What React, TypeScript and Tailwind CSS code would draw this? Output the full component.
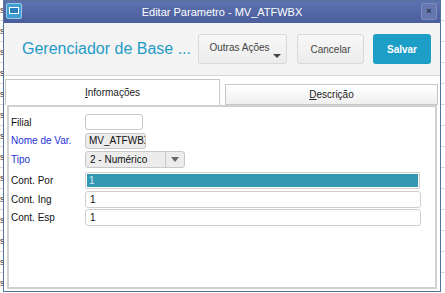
import React from "react";

const F = { fontFamily: '"Liberation Sans", Arial, sans-serif' };

function Row({ label, blue, children }: { label: string; blue?: boolean; children: React.ReactNode }) {
  return (
    <div className="flex items-center h-[18.5px]">
      <div className={`w-[76px] pl-[2px] text-[10px] ${blue ? "text-[#2430d8]" : "text-[#111]"}`}>{label}</div>
      {children}
    </div>
  );
}

export default function App() {
  return (
    <div className="relative w-[445px] h-[293px] overflow-hidden bg-white" style={F}>
      {/* background page */}
      <div className="absolute inset-0 flex flex-col">
        {Array.from({ length: 14 }).map((_, i) => (
          <div key={i} className="h-[21px] border-b border-[#d8d8d8] text-[9px] leading-[21px] pl-0 text-[#333]">s</div>
        ))}
      </div>
      {/* dialog */}
      <div className="absolute left-[3px] top-0 w-[438px] h-[292px] flex flex-col border border-[#56719e] bg-[#f3f3f3]">
        <div className="relative h-[22px] flex items-center justify-center bg-gradient-to-b from-[#5d72b0] to-[#4a5d9c]">
          <div className="absolute left-[2px] top-[2px] w-[16px] h-[16px] rounded-[2px] bg-[#3f9fd0] border border-[#9cc8e8] flex items-center justify-center">
            <div className="w-[10px] h-[7px] border border-white bg-[#2a7fb8] mb-[2px]" />
          </div>
          <span className="text-white text-[11px]">Editar Parametro - MV_ATFWBX</span>
          <div className="absolute right-[3px] top-[2px] w-[16px] h-[17px] rounded-[2px] bg-[#6577ae] border border-[#7d8cbc] flex items-center justify-center text-[#2a2f45] text-[9px] font-bold">×</div>
        </div>
        <div className="h-[53px] flex items-center border-b border-[#d6d6d6] bg-[#f4f4f4]">
          <div className="ml-[18px] text-[16px] text-[#1f9bc8] w-[176px] whitespace-nowrap">Gerenciador de Base ...</div>
          <div className="relative w-[89px] h-[30px] ml-[0px] rounded-[3px] border border-[#d8d8d8] bg-gradient-to-b from-[#f8f8f8] to-[#ececec] flex items-center justify-center text-[10px] text-[#444] pb-[4px] pr-[6px]">
            Outras Ações
            <div className="absolute right-[5px] bottom-[5px] w-0 h-0 border-l-[4px] border-r-[4px] border-t-[4px] border-l-transparent border-r-transparent border-t-[#444]" />
          </div>
          <div className="w-[67px] h-[30px] ml-[10px] rounded-[3px] border border-[#d8d8d8] bg-gradient-to-b from-[#f8f8f8] to-[#ececec] flex items-center justify-center text-[10px] text-[#444]">Cancelar</div>
          <div className="w-[58px] h-[30px] ml-[9px] rounded-[3px] bg-[#1d9ec6] flex items-center justify-center text-[10px] font-bold text-white">Salvar</div>
        </div>
        <div className="flex-1 bg-white px-[1px] pt-[3px] pb-[2px] flex flex-col">
          <div className="flex items-end h-[26px]">
            <div className="w-[215px] h-[26px] border border-b-0 border-[#c8c8c8] bg-white flex items-center justify-center text-[10px] text-[#222]">
              <span><span className="underline">I</span>nformações</span>
            </div>
            <div className="w-[213px] h-[21px] ml-[5px] border border-[#c8c8c8] bg-gradient-to-b from-white to-[#efefef] flex items-center justify-center text-[10px] text-[#222]">
              <span><span className="underline">D</span>escrição</span>
            </div>
          </div>
          <div className="flex-1 mx-[2px] border-2 border-[#d0d0d0] bg-white pt-[6px] flex flex-col">
            <Row label="Filial">
              <div className="w-[58px] h-[16px] rounded-[3px] border border-[#c8c8c8] bg-white" />
            </Row>
            <Row label="Nome de Var." blue>
              <div className="w-[61px] h-[16px] rounded-[3px] border border-[#c8c8c8] bg-[#ececec] text-[10px] text-[#111] pl-[3px] leading-[14px] overflow-hidden whitespace-nowrap">MV_ATFWBX</div>
            </Row>
            <Row label="Tipo" blue>
              <div className="w-[100px] h-[17px] rounded-[3px] border border-[#c8c8c8] bg-[#ececec] flex">
                <div className="flex-1 text-[10px] text-[#111] pl-[4px] leading-[15px]">2 - Numérico</div>
                <div className="w-[19px] border-l border-[#c8c8c8] flex items-center justify-center">
                  <div className="w-0 h-0 border-l-[4px] border-r-[4px] border-t-[5px] border-l-transparent border-r-transparent border-t-[#666]" />
                </div>
              </div>
            </Row>
            <div className="h-[3px]" />
            <Row label="Cont. Por">
              <div className="w-[335px] h-[17px] rounded-[2px] border border-[#cfcfcf] p-[1px]">
                <div className="h-full bg-[#3399b3] text-[10px] text-[#cfe8ef] pl-[2px] leading-[13px]">1</div>
              </div>
            </Row>
            <Row label="Cont. Ing">
              <div className="w-[336px] h-[17px] rounded-[3px] border border-[#cfcfcf] bg-white text-[10px] text-[#111] pl-[4px] leading-[15px]">1</div>
            </Row>
            <Row label="Cont. Esp">
              <div className="w-[336px] h-[17px] rounded-[3px] border border-[#cfcfcf] bg-white text-[10px] text-[#111] pl-[4px] leading-[15px]">1</div>
            </Row>
          </div>
        </div>
      </div>
    </div>
  );
}
